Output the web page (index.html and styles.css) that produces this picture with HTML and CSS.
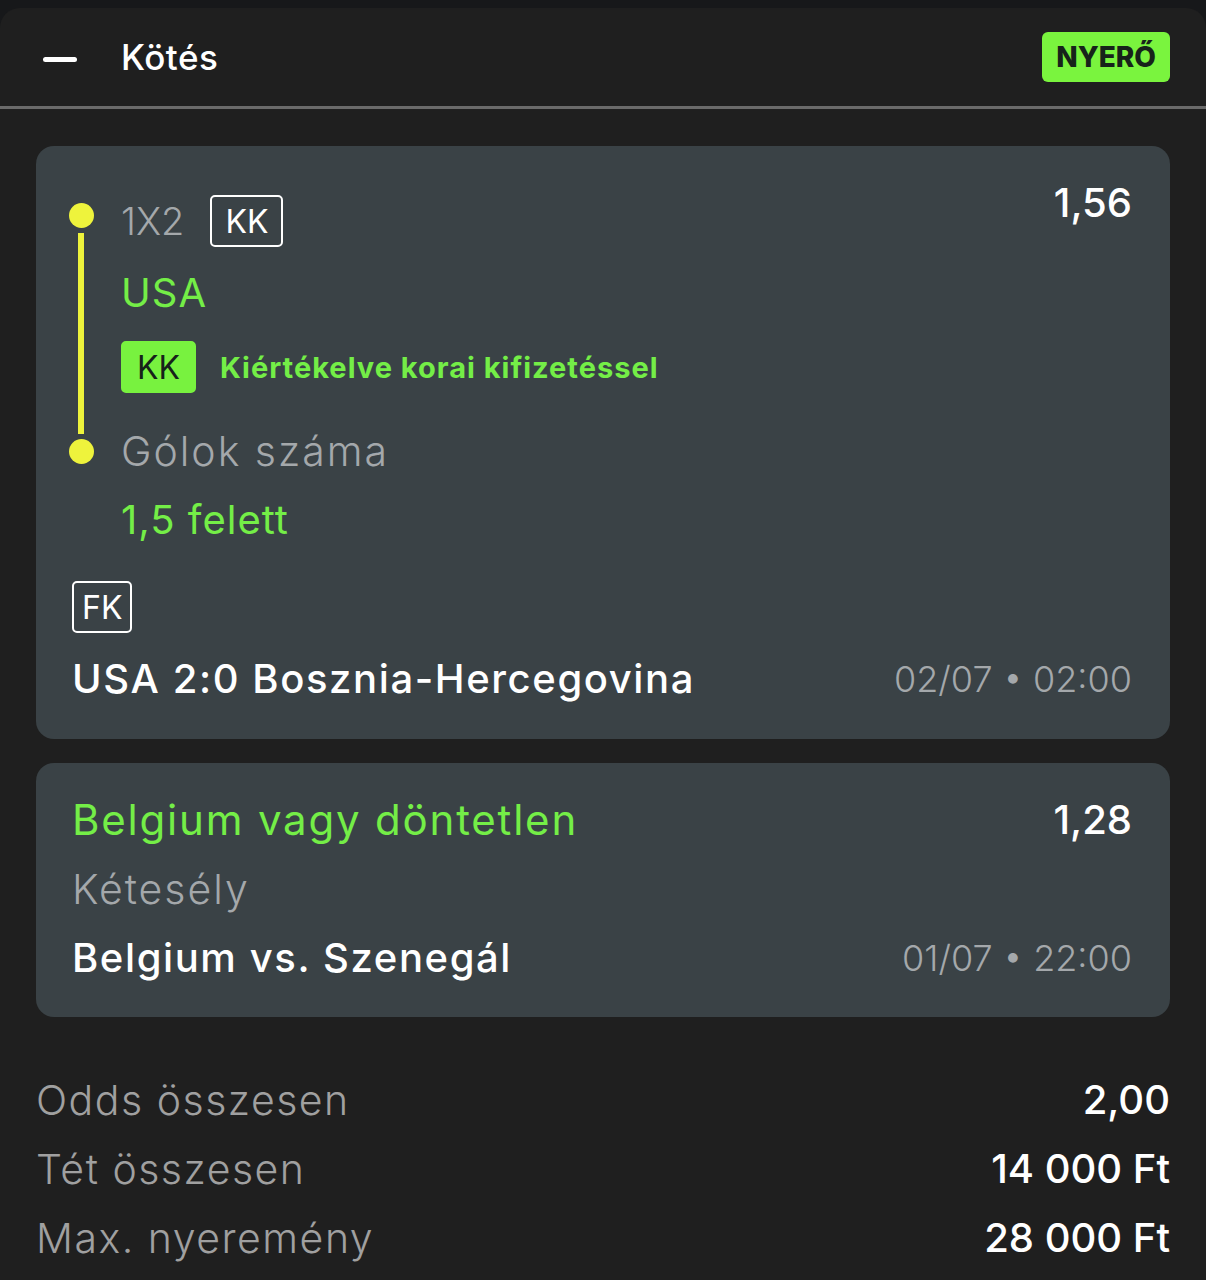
FILE: index.html
```html
<!DOCTYPE html>
<html lang="hu">
<head>
    <meta charset="UTF-8">
    <meta name="viewport" content="width=device-width, initial-scale=1.0">
    <title>Kötés</title>
    <link rel="stylesheet" href="styles.css">
</head>
<body>
    <div class="panel">
        <header class="header">
            <span class="collapse"></span>
            <h1 class="title">Kötés</h1>
            <span class="status">NYERŐ</span>
        </header>

        <main class="content">
            <section class="card">
                <div class="card-top">
                    <div class="legs">
                        <div class="leg leg-first">
                            <div class="marker">
                                <span class="dot"></span>
                                <span class="line"></span>
                            </div>
                            <div class="leg-body">
                                <div class="market-row">
                                    <span class="market">1X2</span>
                                    <span class="tag">KK</span>
                                </div>
                                <div class="pick">USA</div>
                                <div class="settled">
                                    <span class="tag tag-green">KK</span>
                                    <span class="settled-text">Kiértékelve korai kifizetéssel</span>
                                </div>
                            </div>
                        </div>
                        <div class="leg leg-last">
                            <div class="marker">
                                <span class="dot"></span>
                            </div>
                            <div class="leg-body">
                                <div class="market market-big">Gólok száma</div>
                                <div class="pick">1,5 felett</div>
                            </div>
                        </div>
                    </div>
                    <div class="odds">1,56</div>
                </div>
                <span class="tag tag-fk">FK</span>
                <div class="event">
                    <span class="event-name">USA 2:0 Bosznia-Hercegovina</span>
                    <span class="event-date">02/07 • 02:00</span>
                </div>
            </section>

            <section class="card card-single">
                <div class="card-row">
                    <span class="pick pick-single">Belgium vagy döntetlen</span>
                    <span class="odds">1,28</span>
                </div>
                <div class="market market-big market-single">Kétesély</div>
                <div class="event event-single">
                    <span class="event-name">Belgium vs. Szenegál</span>
                    <span class="event-date">01/07 • 22:00</span>
                </div>
            </section>

            <dl class="summary">
                <div class="summary-row">
                    <dt>Odds összesen</dt>
                    <dd>2,00</dd>
                </div>
                <div class="summary-row">
                    <dt>Tét összesen</dt>
                    <dd>14 000 Ft</dd>
                </div>
                <div class="summary-row">
                    <dt>Max. nyeremény</dt>
                    <dd>28 000 Ft</dd>
                </div>
            </dl>
        </main>
    </div>
</body>
</html>
```

FILE: styles.css
```css
body {
    margin: 0;
    background-color: #17181a;
    font-family: Inter, "Noto Sans", sans-serif;
    color: #fff;
    overflow: hidden;
}
.panel {
    margin-top: 8px;
    min-height: 1272px;
    background: #1f1f1f;
    border-radius: 20px 20px 0 0;
}

/* header */
.header {
    display: flex;
    align-items: center;
    height: 98px;
    padding: 0 36px 0 43px;
    border-bottom: 3px solid #6a6a6a;
}
.collapse {
    width: 34px;
    height: 5px;
    border-radius: 3px;
    background: #fff;
    margin-top: 4px;
}
.title {
    flex: 1;
    margin: 0 0 0 44px;
    font-size: 35px;
    font-weight: 500;
    letter-spacing: 0.5px;
}
.status {
    background: #7af43e;
    color: #17231a;
    font-size: 28px;
    font-weight: 800;
    padding: 8px 14px;
    border-radius: 6px;
    line-height: 34px;
}

/* content */
.content {
    padding: 37px 36px 0;
}
.card {
    background: #3a4246;
    border-radius: 18px;
    padding: 33px 38px 36px 36px;
}
.card + .card {
    margin-top: 24px;
}
.card-top {
    display: flex;
    align-items: flex-start;
}
.legs {
    flex: 1;
    padding-top: 16px;
}
.leg {
    display: grid;
    grid-template-columns: 49px 1fr;
}
.leg-first {
    padding-bottom: 34px;
}
.marker {
    display: flex;
    flex-direction: column;
    align-items: center;
    width: 18px;
}
.dot {
    width: 25px;
    height: 25px;
    border-radius: 50%;
    background: #eef33c;
    margin-top: 8px;
    flex-shrink: 0;
}
.line {
    flex: 1;
    width: 6px;
    background: #eef33c;
    margin: 5px 0 -41px;
}
.leg-last .dot {
    margin-top: 12px;
}
.market-row {
    display: flex;
    align-items: center;
    gap: 26px;
}
.market {
    color: #a4a8ab;
    font-size: 38px;
    font-weight: 300;
}
.market-big {
    font-size: 41px;
    line-height: 48px;
    letter-spacing: 2px;
}
.tag {
    display: inline-flex;
    align-items: center;
    justify-content: center;
    height: 48px;
    padding: 0 13px;
    border: 2px solid #fff;
    border-radius: 5px;
    font-size: 32px;
    font-weight: 400;
    color: #fff;
}
.pick {
    color: #74ee47;
    font-size: 40px;
    line-height: 48px;
    margin-top: 22px;
    letter-spacing: 1px;
}
.settled {
    display: flex;
    align-items: center;
    gap: 24px;
    margin-top: 24px;
}
.tag-green {
    background: #78f23f;
    border-color: #78f23f;
    color: #16221a;
    padding: 0 14px;
}
.settled-text {
    color: #74ee47;
    font-size: 29px;
    font-weight: 700;
    letter-spacing: 1px;
}
.leg-last .pick {
    margin-top: 21px;
}
.odds {
    font-size: 40px;
    line-height: 48px;
    font-weight: 500;
}
.tag-fk {
    margin-top: 37px;
    padding: 0 8px;
}
.event {
    display: flex;
    justify-content: space-between;
    align-items: center;
    margin-top: 22px;
    line-height: 48px;
}
.event-name {
    font-size: 40px;
    font-weight: 500;
    letter-spacing: 1.6px;
}
.event-date {
    color: #a4a8ab;
    font-size: 36px;
    font-weight: 300;
}

/* single bet card */
.card-single {
    padding-top: 33px;
    padding-bottom: 35px;
}
.card-row {
    display: flex;
    justify-content: space-between;
    align-items: center;
}
.pick-single {
    margin-top: 0;
    font-size: 42px;
    letter-spacing: 1.8px;
}
.market-single {
    margin-top: 21px;
}
.event-single {
    margin-top: 21px;
}

/* totals */
.summary {
    margin: 48px 0 0;
}
.summary-row {
    display: flex;
    justify-content: space-between;
    align-items: center;
    height: 69px;
}
.summary dt {
    color: #a0a0a0;
    font-size: 41px;
    font-weight: 300;
    letter-spacing: 1.5px;
}
.summary dd {
    margin: 0;
    font-size: 40px;
    font-weight: 500;
}
```
